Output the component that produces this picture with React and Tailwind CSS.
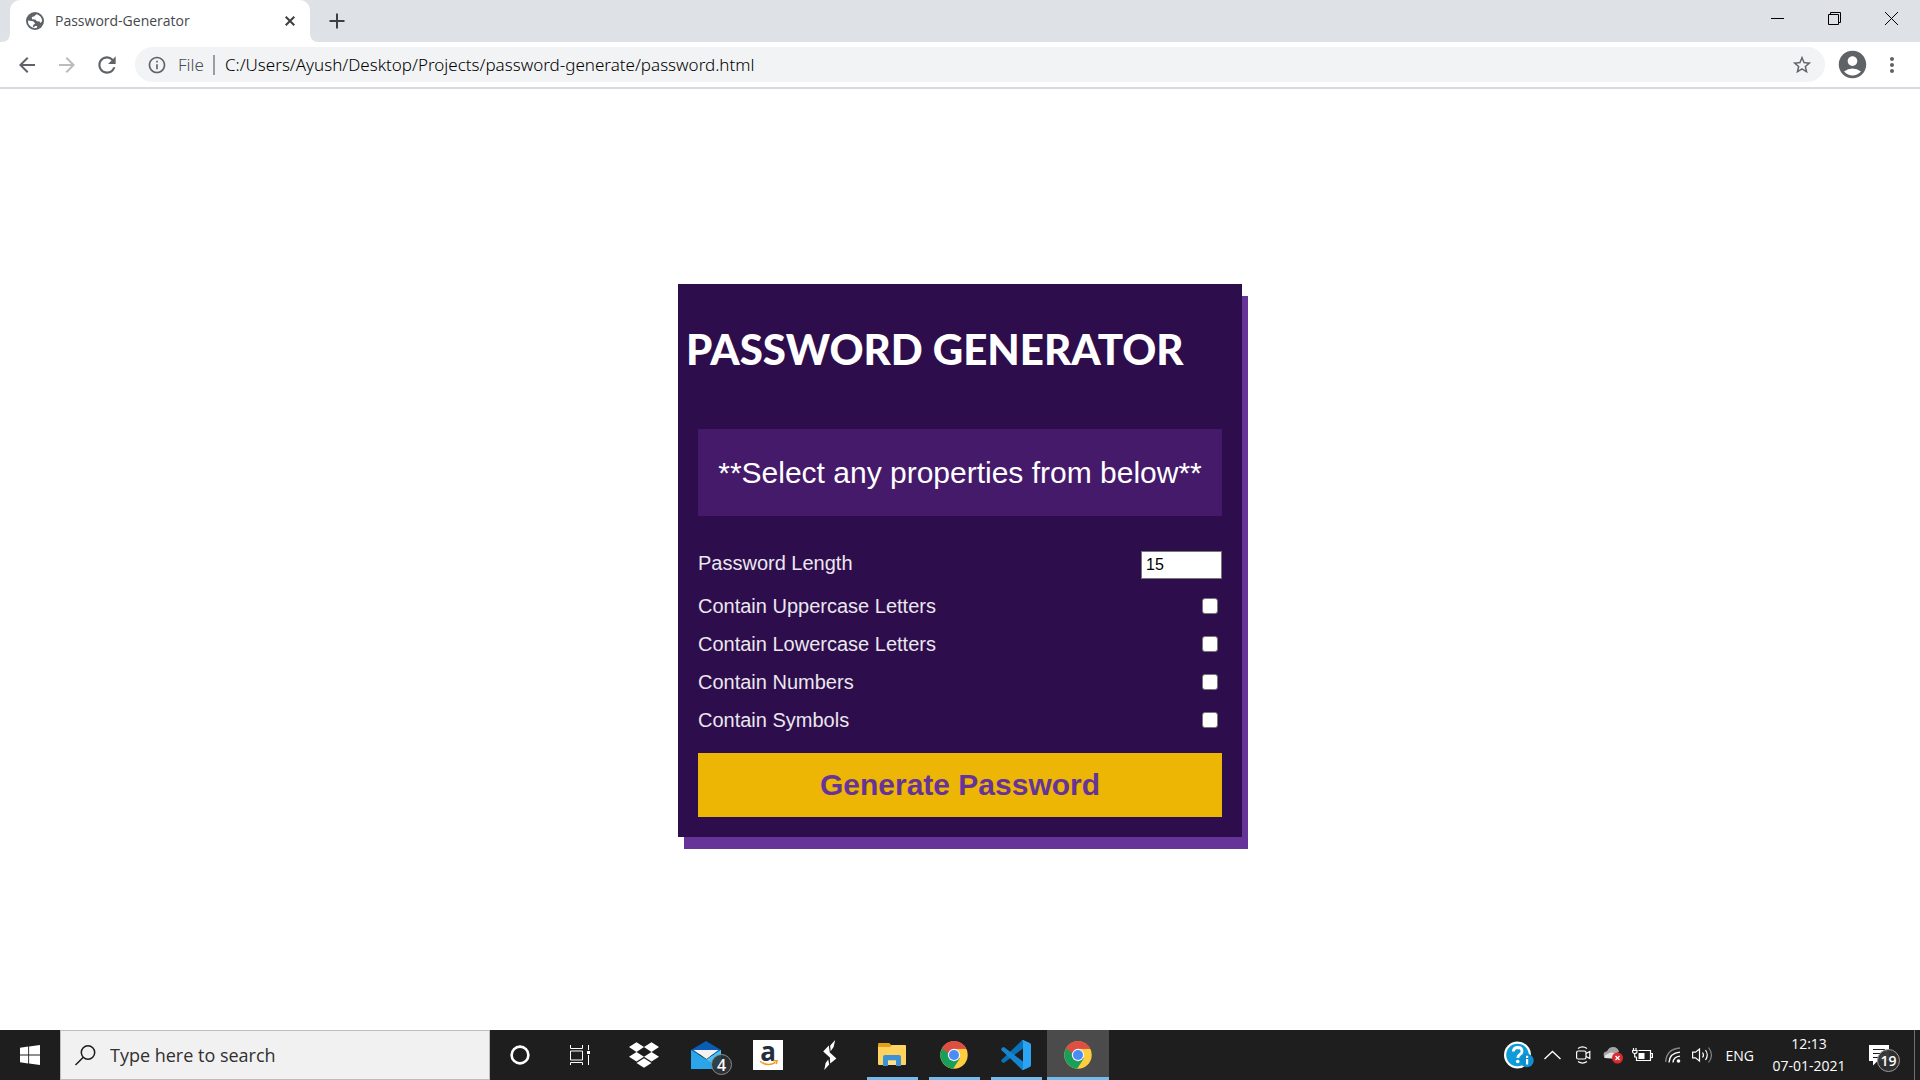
import React, { useState } from "react";
import {
  MdArrowBack,
  MdArrowForward,
  MdRefresh,
  MdInfoOutline,
  MdStarBorder,
  MdAccountCircle,
  MdMoreVert,
} from "react-icons/md";

function GlobeIcon() {
  return (
    <svg width="18" height="18" viewBox="0 0 18 18" aria-hidden="true">
      <circle cx="9" cy="9" r="9" fill="#5f6368" />
      <path d="M10.5 2.2 8 4.5 5.8 5 6 7.2l3.2.3 1.8 1.700 2.600.4.600 1.400 1.900-1.700A7 7 0 0 0 10.500 2.200Z" fill="#fff" />
      <path d="M2 8.500l5.200.8 2 2.200-2 1.500-.4 2.800q2 .8 4.200 0l.2-1.900-2 .1A7 7 0 0 1 6.500 15.500 7 7 0 0 1 2 8.500Z" fill="#fff" />
    </svg>
  );
}

function TabStrip() {
  return (
    <header className="flex h-[42px] items-stretch bg-[#dee1e6] pl-[2px]">
      <svg className="w-2 self-end" height="8" viewBox="0 0 8 8" aria-hidden="true">
        <path d="M8 0v8H0a8 8 0 0 0 8-8Z" fill="#fff" />
      </svg>
      <div className="flex w-[300px] items-center rounded-t-[10px] bg-white pr-[10px] pl-4">
        <GlobeIcon />
        <span className="ml-[11px] flex-1 text-[14px] leading-5 text-[#45484c]">Password-Generator</span>
        <button aria-label="Close tab" className="flex size-5 items-center justify-center">
          <svg width="10" height="10" viewBox="0 0 10 10" aria-hidden="true">
            <path d="m.7.7 8.600 8.600M9.300.7.7 9.300" stroke="#3c4043" strokeWidth="2" />
          </svg>
        </button>
      </div>
      <svg className="w-2 self-end" height="8" viewBox="0 0 8 8" aria-hidden="true">
        <path d="M0 0v8h8a8 8 0 0 1-8-8Z" fill="#fff" />
      </svg>
      <button aria-label="New tab" className="flex w-[38px] items-center justify-center">
        <svg width="16" height="16" viewBox="0 0 16 16" aria-hidden="true">
          <path d="M8 .5v15M.5 8h15" stroke="#3c4043" strokeWidth="2" />
        </svg>
      </button>
      <div className="ml-auto flex h-9">
        <button aria-label="Minimize" className="flex w-[57px] items-center justify-center">
          <svg width="13" height="13" viewBox="0 0 13 13" aria-hidden="true">
            <path d="M0 6.5h13" stroke="#000" />
          </svg>
        </button>
        <button aria-label="Restore" className="flex w-[57px] items-center justify-center">
          <svg width="13" height="13" viewBox="0 0 13 13" fill="none" stroke="#000" aria-hidden="true">
            <path d="M.5 2.5h10v10H.5zM2.5 2.5v-2h10v10h-2" />
          </svg>
        </button>
        <button aria-label="Close window" className="flex w-[57px] items-center justify-center">
          <svg width="13" height="13" viewBox="0 0 13 13" aria-hidden="true">
            <path d="m0 0 13 13M13 0 0 13" stroke="#000" />
          </svg>
        </button>
      </div>
    </header>
  );
}

function Toolbar() {
  return (
    <nav className="flex h-[47px] items-center border-b-2 border-[#d9dae0] bg-white pr-[16px] pl-[7px]">
      <button aria-label="Back" className="flex w-10 justify-center text-[#5f6368]">
        <MdArrowBack className="size-6" />
      </button>
      <button aria-label="Forward" className="flex w-10 justify-center text-[#babcbe]">
        <MdArrowForward className="size-6" />
      </button>
      <button aria-label="Reload" className="flex w-10 justify-center text-[#5f6368]">
        <MdRefresh className="size-[26px]" />
      </button>
      <div className="ml-2 flex h-[35px] flex-1 items-center rounded-full bg-[#f1f3f4] pr-3 pl-3 font-['Segoe_UI','Noto_Sans',sans-serif] text-[17px]">
        <MdInfoOutline className="size-5 text-[#5f6368]" />
        <span className="ml-[11px] font-light text-[#4a4e53]">File</span>
        <span className="ml-[9px] h-5 w-[2px] bg-[#9a9da1]" />
        <input
          aria-label="Address"
          defaultValue="C:/Users/Ayush/Desktop/Projects/password-generate/password.html"
          className="ml-[10px] min-w-0 flex-1 bg-transparent font-light text-black outline-none"
        />
        <button aria-label="Bookmark this page" className="text-[#5f6368]">
          <MdStarBorder className="size-[22px]" />
        </button>
      </div>
      <button aria-label="Profile" className="ml-[11px] text-[#5f6368]">
        <MdAccountCircle className="size-[33px]" />
      </button>
      <button aria-label="Menu" className="ml-[11px] text-[#5f6368]">
        <MdMoreVert className="size-6" />
      </button>
    </nav>
  );
}

const OPTIONS = [
  { id: "uppercase", label: "Contain Uppercase Letters" },
  { id: "lowercase", label: "Contain Lowercase Letters" },
  { id: "numbers", label: "Contain Numbers" },
  { id: "symbols", label: "Contain Symbols" },
];

function GeneratorCard() {
  const [length, setLength] = useState("15");
  return (
    <section className="w-[564px] max-w-full bg-[#2e0d4d] px-5 pt-9 pb-5 font-['Liberation_Sans',Arial,sans-serif] shadow-[6px_12px_0_0_#663399]">
      <h1 className="-ml-3 font-['Comic_Sans_MS','Lato',cursive] text-[42px] leading-[58px] font-black whitespace-nowrap text-white">
        PASSWORD GENERATOR
      </h1>
      <div className="mt-[51px] flex h-[87px] items-center justify-center bg-[#451a6b] text-[30px] whitespace-nowrap text-white">
        **Select any properties from below**
      </div>
      <form className="mt-[35px] text-[20px] leading-6 text-[#ebe7ee]" onSubmit={(e) => e.preventDefault()}>
        <div className="flex flex-col gap-[14px]">
          <div className="flex h-[29px] items-start justify-between">
            <label htmlFor="length">Password Length</label>
            <input
              id="length"
              type="text"
              inputMode="numeric"
              value={length}
              onChange={(e) => setLength(e.target.value)}
              className="h-7 w-[81px] border border-[#767676] bg-white px-1 text-[16px] text-black outline-none"
            />
          </div>
          {OPTIONS.map((o) => (
            <div key={o.id} className="flex items-center justify-between pr-1">
              <label htmlFor={o.id}>{o.label}</label>
              <input
                id={o.id}
                type="checkbox"
                className="size-4 appearance-none rounded-[3px] border border-[#767676] bg-white checked:bg-[#0075ff]"
              />
            </div>
          ))}
        </div>
        <button type="submit" className="mt-[21px] h-16 w-full bg-[#edb605] text-[30px] font-bold text-[#663399]">
          Generate Password
        </button>
      </form>
    </section>
  );
}

function ChromeLogo() {
  return (
    <svg width="28" height="28" viewBox="0 0 48 48" aria-hidden="true">
      <circle cx="24" cy="24" r="23.5" fill="#ffcd40" />
      <path d="M24 24 3.6 12.3A23.5 23.5 0 0 0 22.5 47.4L34 29.8Z" fill="#1a9f5b" />
      <path d="M24 24 3.6 12.3A23.5 23.5 0 0 1 45 13.4H24Z" fill="#dd4f43" />
      <path d="M3.6 12.3 14.5 31 24 24 14 16Z" fill="#1a9f5b" />
      <path d="M3.6 12.3A23.5 23.5 0 0 1 45 13.4H24L14 21Z" fill="#dd4f43" />
      <circle cx="24" cy="24" r="10.6" fill="#f3f3f3" />
      <circle cx="24" cy="24" r="8.6" fill="#4b8bf5" />
    </svg>
  );
}

function CortanaIcon() {
  return (
    <svg width="20" height="20" viewBox="0 0 20 20" aria-hidden="true">
      <circle cx="10" cy="10" r="8.4" fill="none" stroke="#fff" strokeWidth="2.6" />
    </svg>
  );
}

function TaskViewIcon() {
  return (
    <svg width="20" height="20" viewBox="0 0 20 20" fill="none" stroke="#fff" aria-hidden="true">
      <path d="M.5 0v3.5h12V0M.5 6h12v9H.5zM.5 20v-2.5h12V20M18.5 0v5M18.5 10v10" />
      <path d="M17 6h3v3h-3z" fill="#fff" stroke="none" />
    </svg>
  );
}

function DropboxIcon() {
  return (
    <svg width="30" height="30" viewBox="0 0 24 24" fill="#fff" aria-hidden="true">
      <path d="m6 1.8-6 3.8 6 3.9 6-3.9zM18 1.8l-6 3.8 6 3.9 6-3.9zM0 13.3l6 3.8 6-3.8-6-3.8zM18 9.5l-6 3.8 6 3.8 6-3.8zM6 18.4l6 3.8 6-3.8-6-3.8z" />
    </svg>
  );
}

function MailIcon() {
  return (
    <span className="relative block">
      <svg width="30" height="28" viewBox="0 0 30 28" aria-hidden="true">
        <path d="M0 9 15 0l15 9v4H0z" fill="#0a5cb5" />
        <path d="M0 9v19h30V9L15.5 18.5Z" fill="#2aa5ea" />
        <path d="M2.5 9h25L15.5 18Z" fill="#f2f2f2" />
        <path d="M30 9v19L15.5 18.5Z" fill="#45c6f4" />
      </svg>
      <span className="absolute -right-[11px] -bottom-[6px] flex size-[21px] items-center justify-center rounded-full border border-[#8d8d8d] bg-[#2d3338]/90 text-[16px] leading-none font-semibold text-white">
        4
      </span>
    </span>
  );
}

function AmazonIcon() {
  return (
    <span className="flex size-[30px] flex-col items-center bg-white">
      <span className="h-5 font-['Open_Sans',sans-serif] text-[26px] leading-[22px] font-bold text-[#232f3e]">a</span>
      <svg width="19" height="6" viewBox="0 0 19 6" fill="none" aria-hidden="true">
        <path d="M1 1.2c5 4 11 4 15.5 1.2M14.5.8h3.6l-.8 3.4" stroke="#f7981d" strokeWidth="1.4" />
      </svg>
    </span>
  );
}

function StackIcon() {
  return (
    <svg width="14" height="30" viewBox="0 0 14 30" fill="#fff" aria-hidden="true">
      <path d="M12.2 0 10.6 7 7.6 11.2 7.2 5.4ZM5.8 5.6 6.8 12.5 13.4 18.6 7.2 23.6 6.9 17.6.2 11.4ZM5.2 19.4 6.2 24.6 1.3 30 2.6 23Z" />
    </svg>
  );
}

function ExplorerIcon() {
  return (
    <svg width="28" height="24" viewBox="0 0 28 24" aria-hidden="true">
      <path d="M0 1.2Q0 0 1.2 0h10l2 2h14.1v5H0z" fill="#e5a114" />
      <path d="M0 4h12l2-2h13q1 0 1 1v18.2q0 .8-1 .8H1q-1 0-1-1z" fill="#ffd35f" />
      <path d="M5 23V14q0-2 2-2h14q2 0 2 2v9h-5v-5.5h-8V23z" fill="#3e92d4" />
      <path d="M10 17.5h8V22h-8z" fill="#ffe08a" />
    </svg>
  );
}

function VSCodeIcon() {
  return (
    <svg width="30" height="30" viewBox="0 0 30 30" aria-hidden="true">
      <path d="M22 8.5 3.2 22.7Q2.4 23.2 1.6 22.6L.5 21.5Q-.2 20.6.6 19.8L20.6.7 22.5 0Z" fill="#0a72b8" />
      <path d="M22 21.5 3.2 7.3Q2.4 6.8 1.6 7.4L.5 8.5Q-.2 9.4.6 10.2L20.6 29.3 22.5 30Z" fill="#1585cf" />
      <path d="M22.3 0 28.8 3Q30 3.6 30 5v20q0 1.4-1.2 2L22.3 30Q21 30 20.5 29.3 22 29.6 22 28V2Q22 .4 20.5.7 21 0 22.3 0Z" fill="#2ba4f3" />
    </svg>
  );
}

const PINNED = [
  { name: "Dropbox", Icon: DropboxIcon },
  { name: "Mail", Icon: MailIcon },
  { name: "Amazon", Icon: AmazonIcon },
  { name: "Shortcuts", Icon: StackIcon },
  { name: "File Explorer", Icon: ExplorerIcon, running: true },
  { name: "Chrome", Icon: ChromeLogo, running: true },
  { name: "Visual Studio Code", Icon: VSCodeIcon, running: true },
  { name: "Chrome window", Icon: ChromeLogo, running: true, active: true },
];

function HelpIcon() {
  return (
    <svg width="30" height="28" viewBox="0 0 30 28" aria-hidden="true">
      <circle cx="13.5" cy="14" r="13.5" fill="#fff" />
      <circle cx="13.5" cy="14" r="11.3" fill="#0e9bd8" />
      <path d="M9.3 10.5q.3-4 4.5-4 4.2.1 4.2 3.7 0 2-2.3 3.5-1.9 1.2-1.9 3.3" fill="none" stroke="#fff" strokeWidth="2.8" />
      <circle cx="13.7" cy="20.5" r="1.8" fill="#fff" />
      <circle cx="23" cy="19.5" r="6.7" fill="#0e8fd0" />
      <path d="M22 18h2.200v5.500H22zM22 14.800h2.200V17H22z" fill="#fff" />
    </svg>
  );
}

function Tray() {
  return (
    <div className="ml-auto flex items-center">
      <button aria-label="Help" className="mr-[10px]"><HelpIcon /></button>
      <button aria-label="Show hidden icons" className="mr-[15px]">
        <svg width="17" height="10" viewBox="0 0 17 10" aria-hidden="true">
          <path d="m.5 9 8-7.500 8 7.500" fill="none" stroke="#fff" strokeWidth="1.3" />
        </svg>
      </button>
      <button aria-label="Meet now" className="mr-3">
        <svg width="15" height="18" viewBox="0 0 15 18" fill="none" stroke="#fff" strokeWidth="1.2" aria-hidden="true">
          <path d="M2 2.500q4.500-3.200 9 0M2 15.500q4.500 3.200 9 0M10 7.500l3.800-2v7l-3.800-2" />
          <rect x=".6" y="5" width="9.4" height="8" rx="1.5" />
        </svg>
      </button>
      <button aria-label="OneDrive" className="mr-2">
        <svg width="21" height="18" viewBox="0 0 21 18" aria-hidden="true">
          <path d="M1 10.500q-1.500-4.500 3-5.200Q6 .8 10.500 1q4 .2 5.500 4.500L9 12H3q-1.500 0-2-1.500Z" fill="#a3a3a3" />
          <path d="M1.500 12Q1 8.500 5.500 7.500q3.500-2 6.500.5 4.500-2 7.500 2.500l-5 2.500Z" fill="#e2e2e2" />
          <circle cx="14.5" cy="12" r="5.5" fill="#d92b2f" />
          <path d="m12.500 10 4 4M16.500 10l-4 4" stroke="#fff" strokeWidth="1.3" />
        </svg>
      </button>
      <button aria-label="Battery" className="mr-3">
        <svg width="21" height="14" viewBox="0 0 21 14" fill="none" stroke="#fff" strokeWidth="1.2" aria-hidden="true">
          <path d="M6.500 2.500h12v10H4.500V9M19 5.500h1.400v4H19M1.500 0v2M4 0v2M.5 2.500h4.500v1Q5 5.500 2.700 5.500.5 5.500.5 2.500ZM2.700 5.500V9h2" />
          <path d="M6.500 5h6v6h-6z" fill="#fff" stroke="none" />
        </svg>
      </button>
      <button aria-label="Network" className="mr-[11px]">
        <svg width="16" height="16" viewBox="0 0 16 16" fill="none" stroke="#fff" strokeWidth="1.3" aria-hidden="true">
          <path d="M.7 15Q1.500 2 15 1" stroke="#858585" />
          <path d="M4 15.500Q4.500 6 15 5.200M8 15.500Q8.500 9.800 15 9.200" />
          <circle cx="13.5" cy="14" r="1.8" fill="#fff" stroke="none" />
        </svg>
      </button>
      <button aria-label="Volume" className="mr-[13px]">
        <svg width="21" height="18" viewBox="0 0 21 18" fill="none" stroke="#fff" strokeWidth="1.2" aria-hidden="true">
          <path d="M.6 6.200h2.900L7.500 3v12l-4-3.200H.6ZM10.500 6.500q2 2.500 0 5M13.500 4q3.500 5 0 10" />
          <path d="M16.500 1.500q6 7.500 0 15" stroke="#858585" />
        </svg>
      </button>
      <span className="text-[14px]">ENG</span>
      <div className="ml-[15px] flex w-20 flex-col items-center text-[14px] leading-[22px] whitespace-nowrap">
        <time>12:13</time>
        <time>07-01-2021</time>
      </div>
      <button aria-label="Notifications" className="relative ml-[20px] h-[30px] w-[31px]">
        <svg width="20" height="21" viewBox="0 0 20 21" aria-hidden="true">
          <path d="M0 0h20v16H8.500L4 20.500V16H0z" fill="#fff" />
          <path d="M4 4.500h12M4 8.500h12M4 12.500h6" stroke="#1e1e1e" strokeWidth="1.2" />
        </svg>
        <span className="absolute top-[9px] left-2 flex size-[23px] items-center justify-center rounded-full border border-[#9b9b9b] bg-[#303030]/95 text-[14px] leading-none font-semibold">
          19
        </span>
      </button>
      <span className="mr-[5px] ml-[14px] h-[50px] w-px bg-[#6f6f6f]" />
    </div>
  );
}

function Taskbar() {
  return (
    <footer className="flex h-[50px] items-stretch bg-[#1e1e1e] text-white">
      <button aria-label="Start" className="flex w-[60px] items-center justify-center">
        <svg width="20" height="20" viewBox="0 0 20 20" fill="#fff" aria-hidden="true">
          <path d="M0 2.800 8.200 1.600v7.900H0zM9.100 1.500 20 0v9.500H9.100zM0 10.400h8.200v8L0 17.200zM9.100 10.400H20V20L9.100 18.500z" />
        </svg>
      </button>
      <label className="flex w-[430px] items-center border border-[#bdbdbd] bg-[#f1f1f1] pl-[14px]">
        <svg width="21" height="21" viewBox="0 0 21 21" fill="none" stroke="#1b1b1b" strokeWidth="1.5" aria-hidden="true">
          <circle cx="13" cy="7.5" r="6.7" />
          <path d="M8.300 12.300.5 20" />
        </svg>
        <input
          aria-label="Search"
          placeholder="Type here to search"
          className="ml-[14px] min-w-0 flex-1 bg-transparent text-[18px] text-[#303030] outline-none placeholder:text-[#303030]"
        />
      </label>
      <button aria-label="Cortana" className="flex w-[60px] items-center justify-center"><CortanaIcon /></button>
      <button aria-label="Task View" className="mr-[3px] flex w-[60px] items-center justify-center"><TaskViewIcon /></button>
      {PINNED.map(({ name, Icon, running, active }) => (
        <button
          key={name}
          aria-label={name}
          className={
            "grid w-[62px] grid-rows-[47px_3px] justify-items-center " + (active ? "bg-[#4b4b4b]" : "")
          }
        >
          <span className="self-center pt-[3px]"><Icon /></span>
          {running && <span className={active ? "h-full w-full bg-[#76b9ed]" : "h-full w-[51px] bg-[#76b9ed]"} />}
        </button>
      ))}
      <Tray />
    </footer>
  );
}

export default function App() {
  return (
    <div className="flex min-h-screen flex-col bg-white font-['Segoe_UI','Open_Sans',sans-serif]">
      <TabStrip />
      <Toolbar />
      <main className="flex flex-1 items-center justify-center pt-px">
        <GeneratorCard />
      </main>
      <Taskbar />
    </div>
  );
}
